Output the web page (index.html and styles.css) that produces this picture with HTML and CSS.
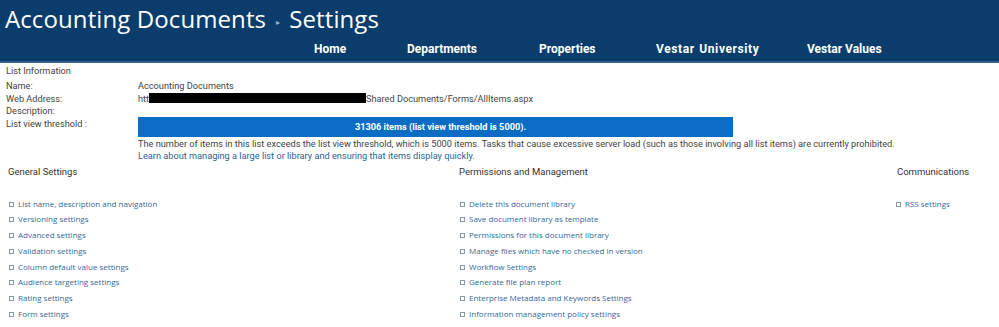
FILE: index.html
```html
<!DOCTYPE html>
<html lang="en">
<head>
  <meta charset="UTF-8">
  <title>Accounting Documents - Settings</title>
  <link rel="stylesheet" href="styles.css">
</head>
<body>
  <div class="header">
    <h1 class="title">Accounting Documents<span class="crumb-sep">&#9656;</span>Settings</h1>
    <ul class="nav">
      <li class="nav-home">Home</li>
      <li class="nav-dept">Departments</li>
      <li class="nav-prop">Properties</li>
      <li class="nav-univ">Vestar University</li>
      <li>Vestar Values</li>
    </ul>
  </div>

  <!-- List Information -->
  <div class="info">
    <div class="info-title">List Information</div>
    <div class="info-grid">
      <div class="label">Name:</div>
      <div class="value">Accounting Documents</div>
      <div class="label">Web Address:</div>
      <div class="value">htt<span class="redact"></span>Shared Documents/Forms/AllItems.aspx</div>
      <div class="label">Description:</div>
      <div class="value"></div>
      <div class="label label-threshold">List view threshold :</div>
      <div class="value">
        <div class="threshold-bar">31306 items (list view threshold is 5000).</div>
        <div class="threshold-note">The number of items in this list exceeds the list view threshold, which is 5000 items. Tasks that cause excessive server load (such as those involving all list items) are currently prohibited.</div>
        <a class="threshold-link" href="#">Learn about managing a large list or library and ensuring that items display quickly.</a>
      </div>
    </div>
  </div>

  <!-- Settings columns -->
  <div class="settings">
    <div class="section">
      <h3>General Settings</h3>
      <ul class="links">
        <li><a href="#">List name, description and navigation</a></li>
        <li><a href="#">Versioning settings</a></li>
        <li><a href="#">Advanced settings</a></li>
        <li><a href="#">Validation settings</a></li>
        <li><a href="#">Column default value settings</a></li>
        <li><a href="#">Audience targeting settings</a></li>
        <li><a href="#">Rating settings</a></li>
        <li><a href="#">Form settings</a></li>
      </ul>
    </div>
    <div class="section">
      <h3>Permissions and Management</h3>
      <ul class="links">
        <li><a href="#">Delete this document library</a></li>
        <li><a href="#">Save document library as template</a></li>
        <li><a href="#">Permissions for this document library</a></li>
        <li><a href="#">Manage files which have no checked in version</a></li>
        <li><a href="#">Workflow Settings</a></li>
        <li><a href="#">Generate file plan report</a></li>
        <li><a href="#">Enterprise Metadata and Keywords Settings</a></li>
        <li><a href="#">Information management policy settings</a></li>
      </ul>
    </div>
    <div class="section section-comm">
      <h3>Communications</h3>
      <ul class="links">
        <li><a href="#">RSS settings</a></li>
      </ul>
    </div>
  </div>
</body>
</html>
```

FILE: styles.css
```css
body {
  margin: 0;
  padding: 0;
  font-family: Roboto, Arial, sans-serif;
  background-color: white;
  color: #444;
}
.header {
  background-color: #0b3d6c;
  height: 61px;
  border-bottom: 2px solid #2d5f8a;
  color: white;
}
.title {
  margin: 0;
  padding: 4px 0 0 5px;
  font-family: "Open Sans", Arial, sans-serif;
  font-weight: normal;
  font-size: 24px;
  line-height: 30px;
  letter-spacing: 0.1px;
}
.crumb-sep {
  font-size: 8px;
  color: #9fb3c8;
  vertical-align: middle;
  margin: 0 9px 0 10px;
}
.nav {
  list-style: none;
  margin: 3px 0 0 314px;
  padding: 0;
  display: flex;
  font-weight: bold;
  font-size: 12px;
  line-height: 18px;
}
.nav li {
  white-space: nowrap;
}
.nav .nav-home {
  width: 93px;
}
.nav .nav-dept {
  width: 132px;
}
.nav .nav-prop {
  width: 117px;
}
.nav .nav-univ {
  width: 151px;
  letter-spacing: 0.6px;
  word-spacing: 1px;
}
.info {
  padding: 2px 0 0 6px;
  font-size: 9.2px;
  line-height: 12.3px;
}
.info-grid {
  display: grid;
  grid-template-columns: 132px auto;
  margin-top: 3px;
}
.label-threshold {
  padding-top: 1px;
}
.redact {
  display: inline-block;
  width: 217px;
  height: 10px;
  background-color: black;
  vertical-align: -1px;
}
.threshold-bar {
  width: 595px;
  height: 20px;
  background-color: #0a6cc4;
  color: white;
  font-weight: bold;
  line-height: 20px;
  text-align: center;
  box-sizing: border-box;
  padding-left: 10px;
}
.threshold-note {
  margin-top: 1px;
}
.threshold-link {
  color: #2a6496;
  text-decoration: none;
}
.settings {
  display: grid;
  grid-template-columns: 451px 436px auto;
  padding-left: 8px;
  margin-top: 2px;
}
.section h3 {
  margin: 0 0 17px 0;
  font-size: 9.5px;
  font-weight: normal;
  color: #333;
  line-height: 14px;
}
.section-comm h3 {
  margin-left: 2px;
}
.links {
  list-style: none;
  margin: 0;
  padding: 0;
}
.links li {
  font-family: "Open Sans", Arial, sans-serif;
  font-size: 8px;
  line-height: 15.7px;
  padding-left: 10px;
  position: relative;
}
.links li::before {
  content: "";
  position: absolute;
  left: 1px;
  top: 6px;
  width: 3px;
  height: 3px;
  border: 1px solid #8a9aaa;
}
.links a {
  color: #33689a;
  text-decoration: none;
}
```
